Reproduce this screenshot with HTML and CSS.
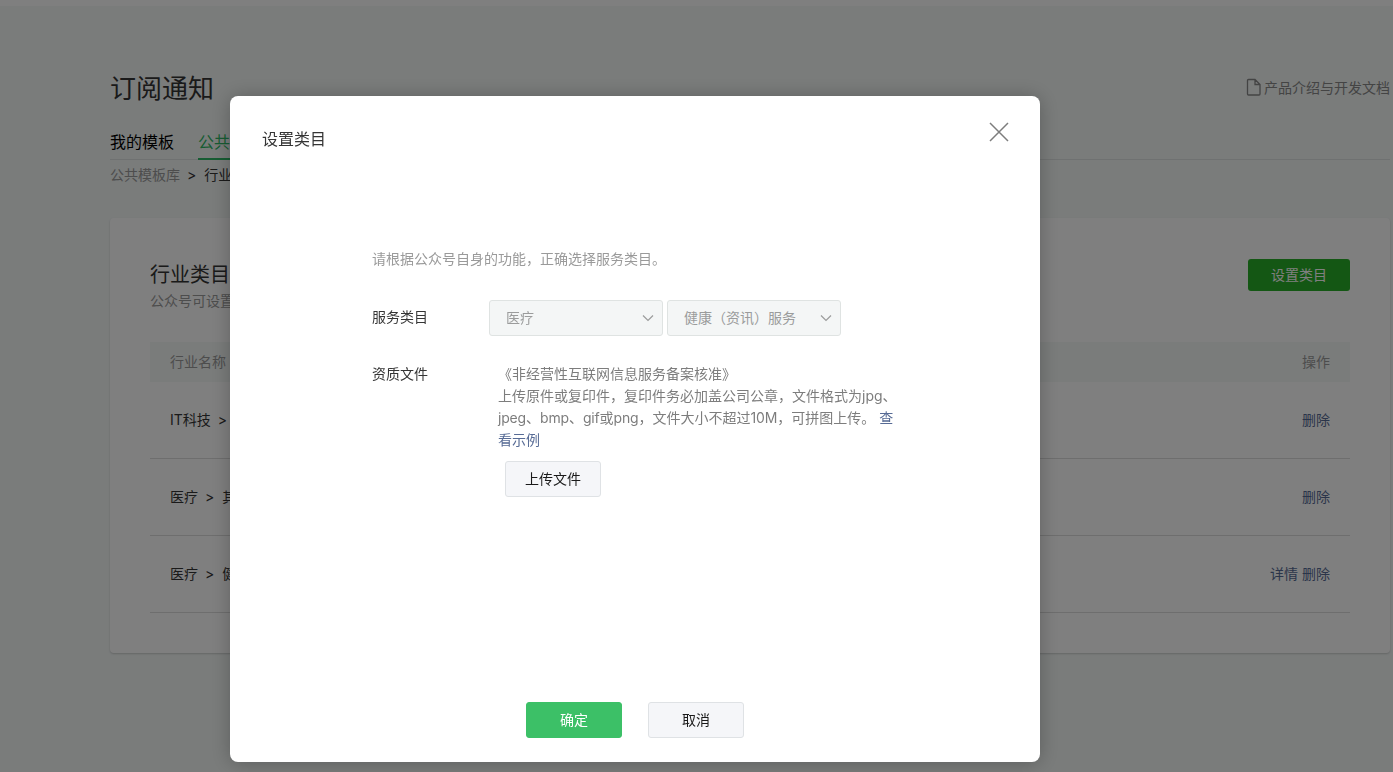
FILE: index.html
```html
<!DOCTYPE html>
<html lang="zh-CN">
  <head>
    <meta charset="UTF-8" />
    <meta name="viewport" content="width=device-width, initial-scale=1.0" />
    <title>订阅通知</title>
    <link rel="stylesheet" href="styles.css">
  </head>
  <body>
    <div class="topbar"></div>
    <main class="page">
      <header class="page-header">
        <h1>订阅通知</h1>
        <a class="doc-link">
          <svg width="16" height="18" viewBox="0 0 16 18" fill="none" stroke="currentColor" stroke-width="1.3">
            <path d="M2.500 1.500h6.500l5 5v9.500a1 1 0 0 1-1 1H2.500a1 1 0 0 1-1-1v-13.500a1 1 0 0 1 1-1zM9 1.500v5h5" />
          </svg>
          <span>产品介绍与开发文档</span>
        </a>
      </header>
      <nav class="tabs">
        <a class="tab">我的模板</a>
        <a class="tab active">公共模板</a>
      </nav>
      <div class="breadcrumb">
        <a>公共模板库</a><i>&gt;</i><span>行业类目</span>
      </div>

      <section class="panel">
        <div class="panel-header">
          <div>
            <h2>行业类目</h2>
            <p>公众号可设置服务类目</p>
          </div>
          <button class="btn-set">设置类目</button>
        </div>
        <div class="table">
          <div class="row head"><span>行业名称</span><span>操作</span></div>
          <div class="row">
            <div>IT科技<i>&gt;</i>其他</div>
            <div class="ops"><a>删除</a></div>
          </div>
          <div class="row">
            <div>医疗<i>&gt;</i>其他</div>
            <div class="ops"><a>删除</a></div>
          </div>
          <div class="row">
            <div>医疗<i>&gt;</i>健康（资讯）服务</div>
            <div class="ops"><a>详情</a><a>删除</a></div>
          </div>
        </div>
      </section>
    </main>

    <!-- Dialog -->
    <div class="mask">
      <div class="dialog">
        <div class="dialog-header">
          <h3>设置类目</h3>
          <svg class="close" width="20" height="20" viewBox="0 0 20 20" fill="none" stroke="#7d7d7d" stroke-width="1.5">
            <path d="M1 1l18 18M19 1L1 19" />
          </svg>
        </div>
        <div class="dialog-body">
          <p class="tips">请根据公众号自身的功能，正确选择服务类目。</p>
          <div class="field">
            <label>服务类目</label>
            <div class="selects">
              <div class="select">
                <span>医疗</span>
                <svg width="12" height="8" viewBox="0 0 12 8" fill="none" stroke="#9b9c9c" stroke-width="1.2"><path d="M1 1.500l5 5L11 1.500" /></svg>
              </div>
              <div class="select">
                <span>健康（资讯）服务</span>
                <svg width="12" height="8" viewBox="0 0 12 8" fill="none" stroke="#9b9c9c" stroke-width="1.2"><path d="M1 1.500l5 5L11 1.500" /></svg>
              </div>
            </div>
          </div>
          <div class="field files">
            <label>资质文件</label>
            <div class="file-info">
              <p class="file-name">《非经营性互联网信息服务备案核准》</p>
              <p>上传原件或复印件，复印件务必加盖公司公章，文件格式为jpg、<br><span class="ext">jpeg</span>、<span class="ext">bmp</span>、<span class="ext">gif</span>或<span class="ext">png</span>，文件大小不超过<span class="ext">10M</span>，可拼图上传。 <a>查<br>看示例</a></p>
              <button class="btn btn-upload">上传文件</button>
            </div>
          </div>
        </div>
        <div class="dialog-footer">
          <button class="btn btn-primary">确定</button>
          <button class="btn">取消</button>
        </div>
      </div>
    </div>
  </body>
</html>
```
FILE: styles.css
```css
* {
  box-sizing: border-box;
}

body {
  margin: 0;
  height: 772px;
  overflow: hidden;
  background-color: #f4f8f7;
  color: #353535;
  font-family: "Inter", "Noto Sans CJK SC", sans-serif;
  font-size: 14px;
  line-height: 22px;
}

h1,
h2,
h3,
p {
  margin: 0;
  font-weight: 400;
}

i {
  margin: 0 8px 0 7px;
  font-style: normal;
}

button {
  padding: 0 0 2px;
  font-family: inherit;
  font-size: 14px;
}

.topbar {
  height: 6px;
  background-color: #fff;
}

.page {
  width: 1280px;
  margin-left: 110px;
  padding-top: 64px;
}

.page-header {
  display: flex;
  justify-content: space-between;
  align-items: center;
  height: 36px;
}

h1 {
  padding-top: 2px;
  font-size: 26px;
  line-height: 36px;
}

.doc-link {
  display: flex;
  align-items: center;
  gap: 2px;
  color: #888;
}

.doc-link svg {
  margin-bottom: 2px;
}

.tabs {
  display: flex;
  gap: 24px;
  height: 40px;
  margin-top: 14px;
  padding-top: 10px;
  border-bottom: 1px solid #dfe3e2;
}

.tab {
  height: 30px;
  font-size: 16px;
  line-height: 24px;
  color: #000;
}

.tab.active {
  color: #2fb866;
  border-bottom: 2px solid #2fb866;
}

.breadcrumb {
  margin-top: 4px;
}

.breadcrumb a {
  color: #9a9a9a;
}

.panel {
  height: 435px;
  margin-top: 32px;
  padding: 41px 40px 0;
  background-color: #fff;
  border-radius: 4px;
  box-shadow: 0 1px 2px rgba(0, 0, 0, 0.18);
}

.panel-header {
  display: flex;
  justify-content: space-between;
  align-items: flex-start;
  height: 83px;
}

h2 {
  padding-top: 1px;
  font-size: 20px;
  line-height: 30px;
}

.panel-header p {
  color: #9a9a9a;
}

.btn-set {
  width: 102px;
  height: 32px;
  border: none;
  border-radius: 3px;
  background-color: #28ae28;
  color: #fff;
}

.row {
  display: flex;
  justify-content: space-between;
  align-items: center;
  height: 77px;
  padding: 0 20px;
  border-bottom: 1px solid #dcdcdc;
}

.row.head {
  height: 40px;
  border-bottom: none;
  background-color: #f4f8f7;
  color: #9a9a9a;
}

.ops {
  display: flex;
  gap: 4px;
  color: #576b95;
}

.mask {
  position: fixed;
  inset: 0;
  padding: 96px 0 0 230px;
  background-color: rgba(0, 0, 0, 0.5);
}

.dialog {
  display: flex;
  flex-direction: column;
  width: 810px;
  height: 666px;
  border-radius: 8px;
  background-color: #fff;
  box-shadow: 0 1px 20px rgba(0, 0, 0, 0.25);
}

.dialog-header {
  display: flex;
  justify-content: space-between;
  align-items: flex-start;
  height: 152px;
  padding: 26px 31px 0 32px;
}

h3 {
  font-size: 16px;
  line-height: 34px;
}

.dialog-body {
  flex: 1;
  padding-left: 142px;
}

.tips {
  color: #9a9a9a;
}

.field {
  display: flex;
  margin-top: 30px;
}

.field label {
  width: 117px;
  line-height: 34px;
}

.selects {
  display: flex;
  gap: 4px;
}

.select {
  display: flex;
  justify-content: space-between;
  align-items: center;
  width: 174px;
  height: 36px;
  padding: 0 8px 0 16px;
  border: 1px solid #dfe3e2;
  border-radius: 3px;
  background-color: #f4f6f6;
  color: #9b9c9c;
}

.files {
  margin-top: 27px;
}

.files label {
  width: 126px;
  line-height: 22px;
}

.file-info {
  color: #7d7d7d;
}

.file-info a {
  color: #576b95;
}

.ext {
  letter-spacing: -0.17px;
}

.btn {
  width: 96px;
  height: 36px;
  border: 1px solid #dfe2e5;
  border-radius: 3px;
  background-color: #f5f6f9;
  color: #1a1a1a;
}

.btn-upload {
  margin: 10px 0 0 7px;
}

.btn-primary {
  border-color: #3cc067;
  background-color: #3cc067;
  color: #fff;
}

.dialog-footer {
  display: flex;
  justify-content: center;
  gap: 26px;
  height: 60px;
}
```
